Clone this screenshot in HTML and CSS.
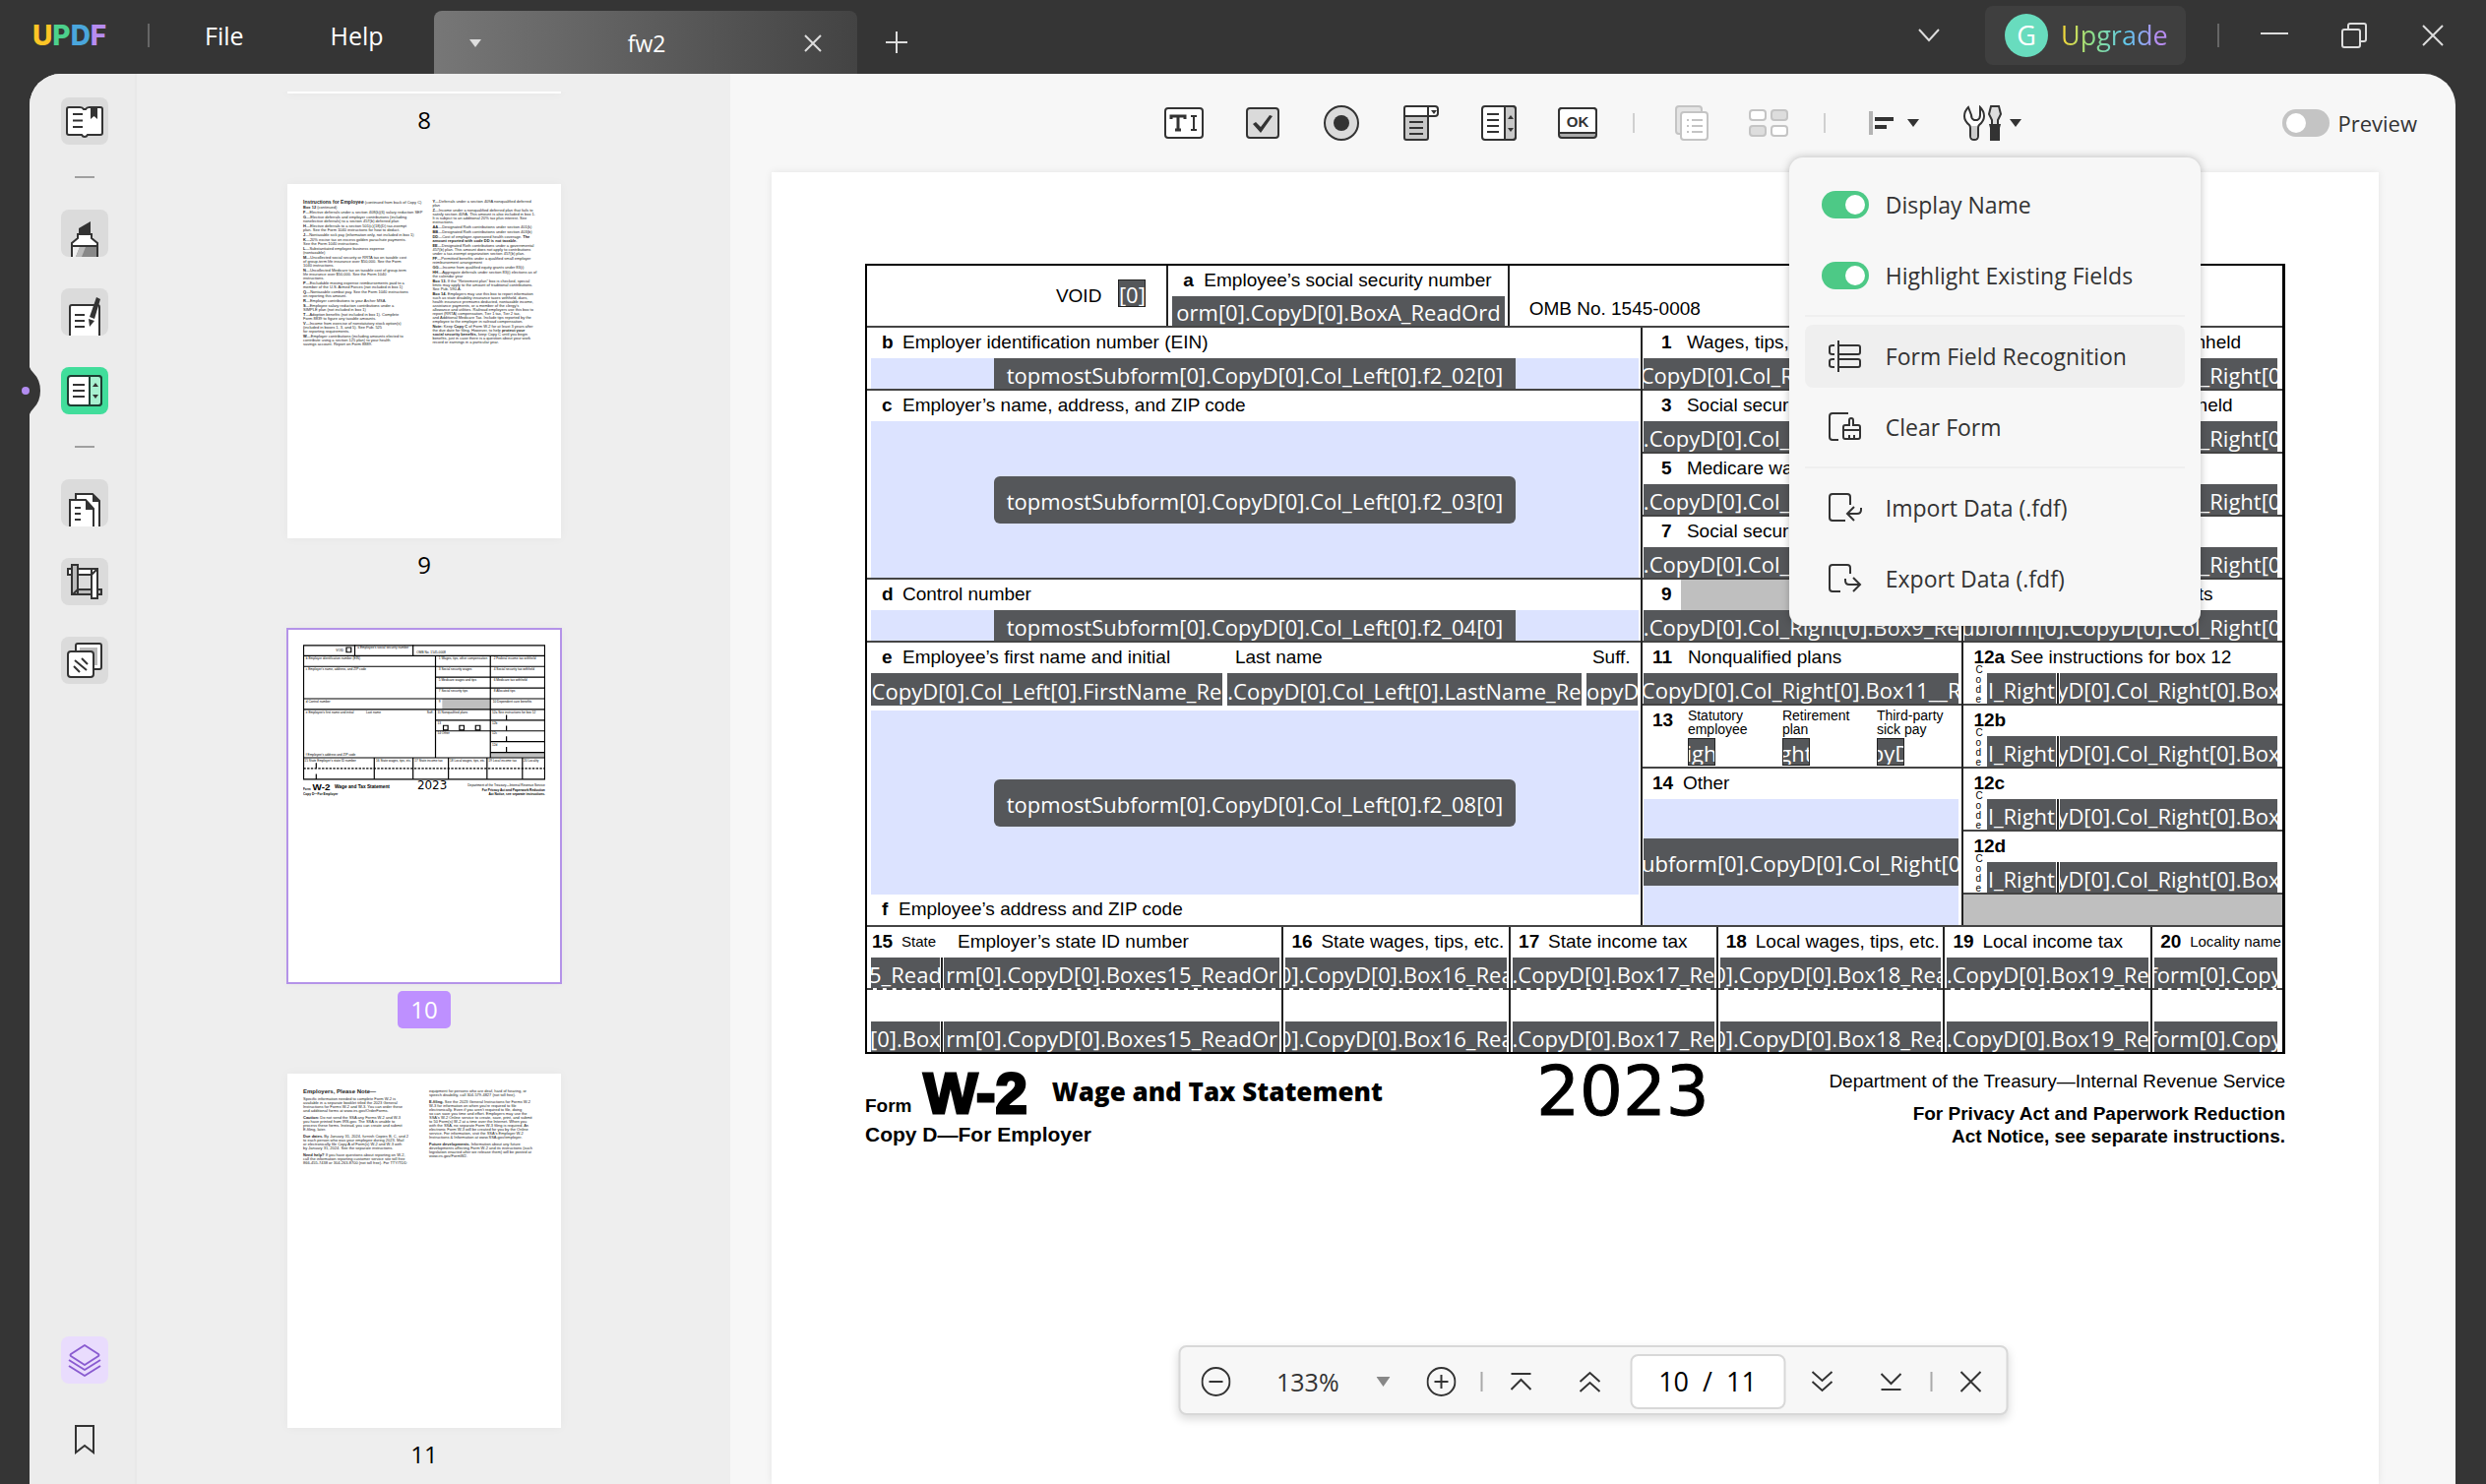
FILE: index.html
```html
<!DOCTYPE html>
<html lang="en">
<head>
<meta charset="utf-8">
<title>fw2 - UPDF</title>
<link rel="stylesheet" href="styles.css">
</head>
<body>
<div class="app">
  <header class="titlebar">
    <div class="logo" aria-label="UPDF"><span class="lu">U</span><span class="lp">P</span><span class="ld">D</span><span class="lf">F</span></div>
    <span class="bar-div"></span>
    <nav class="menus"><button type="button">File</button><button type="button">Help</button></nav>
    <div class="tab">
      <button type="button" class="tab-caret" aria-label="Tab list"><svg width="12" height="8"><path d="M0 0h12L6 8z" fill="#ddd"/></svg></button>
      <span class="tab-name">fw2</span>
      <button type="button" class="tab-close" aria-label="Close tab"><svg width="18" height="18"><path d="M1 1l16 16M17 1L1 17" stroke="#ddd" stroke-width="2"/></svg></button>
    </div>
    <button type="button" class="new-tab" aria-label="New tab"><svg width="24" height="24"><path d="M12 1v22M1 12h22" stroke="#ddd" stroke-width="2"/></svg></button>
    <div class="win">
      <button type="button" aria-label="More"><svg width="22" height="14"><path d="M1 1l10 11L21 1" fill="none" stroke="#ddd" stroke-width="2"/></svg></button>
      <button type="button" class="upgrade"><span class="avatar">G</span><span class="up-text">Upgrade</span></button>
      <span class="bar-div"></span>
      <button type="button" class="w-min" aria-label="Minimize"><svg width="28" height="26"><path d="M0 11h28" stroke="#ddd" stroke-width="2"/></svg></button>
      <button type="button" aria-label="Restore"><svg width="26" height="26" fill="none" stroke="#ddd" stroke-width="2"><rect x="1" y="7" width="18" height="18" rx="2"/><path d="M7 7V3q0-2 2-2h14q2 0 2 2v14q0 2-2 2h-4"/></svg></button>
      <button type="button" aria-label="Close"><svg width="22" height="22"><path d="M1 1l20 20M21 1L1 21" stroke="#ddd" stroke-width="2"/></svg></button>
    </div>
  </header>

  <main class="shell">
    <aside class="rail">
      <button type="button" class="tile" aria-label="Reader"><svg viewBox="0 0 48 48"><path d="M8 10h11q3 0 4 2h2q1-2 4-2h11q2 0 2 2v24q0 2-2 2H27q-1 2-3 2t-3-2H8q-2 0-2-2V12q0-2 2-2z" fill="#fff" stroke="#333" stroke-width="2"/><path d="M30 9h7v13l-3.500-3-3.500 3z" fill="#333"/><path d="M12 17h10M12 23.500h10M12 30h10" stroke="#333" stroke-width="2"/></svg></button>
      <span class="rail-div"></span>
      <button type="button" class="tile" aria-label="Comment"><svg viewBox="0 0 48 48"><path d="M18 25v-6l12-7v13z" fill="#333"/><path d="M17 25h14v4l6 5v4H11v-4l6-5z" fill="#fff" stroke="#333" stroke-width="2"/><path d="M11 37h26v12H11z" fill="#888"/><path d="M12 38h7l-4 10h-3z" fill="#eee"/><path d="M19 38h6l-4 10h-6z" fill="#bbb"/><path d="M11 48V37h26v11" fill="none" stroke="#333" stroke-width="2"/></svg></button>
      <button type="button" class="tile" aria-label="Edit PDF"><svg viewBox="0 0 48 48"><path d="M9 48V19q0-2 2-2h26q2 0 2 2v29" fill="#fff" stroke="#333" stroke-width="2"/><path d="M14 27h10M14 33h10M14 39h10" stroke="#333" stroke-width="2"/><path d="M36 9l4 2-6 20-5-2z" fill="#333"/><path d="M28 31l6 2-5 6z" fill="#333"/></svg></button>
      <div class="active-slot">
        <svg class="notch" viewBox="0 0 20 48"><path d="M8 0q1 3 4 6 7 7 7 18t-7 18q-3 3-4 6z" fill="#353535"/><circle cx="4" cy="24" r="4" fill="#b28cf0"/></svg>
        <button type="button" class="tile active" aria-label="Prepare Form"><svg viewBox="0 0 48 48"><rect x="7" y="9" width="34" height="30" rx="3" fill="#fff" stroke="#1e3f33" stroke-width="2"/><path d="M29 9h9q3 0 3 3v24q0 3-3 3h-9z" fill="#a8f0d0" stroke="#1e3f33" stroke-width="2"/><path d="M12 18h12M12 24h12M12 30h12" stroke="#333" stroke-width="2"/><path d="M32 20h6l-3-4zM32 28h6l-3 4z" fill="#333"/></svg></button>
      </div>
      <span class="rail-div"></span>
      <button type="button" class="tile" aria-label="Organize Pages"><svg viewBox="0 0 48 48"><path d="M15 48V15h17l7 7v26" fill="#fff" stroke="#333" stroke-width="2"/><path d="M32 15v8h8z" fill="#333"/><path d="M9 48V21h16l8 9v18" fill="#fff" stroke="#333" stroke-width="2"/><path d="M25 21v10h9z" fill="#333"/><path d="M14 29h6M14 35h6M14 41h6" stroke="#333" stroke-width="2"/></svg></button>
      <button type="button" class="tile" aria-label="Crop"><svg viewBox="0 0 48 48"><g fill="#fff" stroke="#333" stroke-width="2"><path d="M7 11h30v6H7z"/><path d="M12 32h29v5H12z" fill="#bbb"/><path d="M31 11h6v30h-6z"/><path d="M11 7h6v30h-6z" fill="#bbb"/></g><path d="M17 32l-5 5M31 17l5-5" stroke="#333" stroke-width="2"/></svg></button>
      <button type="button" class="tile" aria-label="Background"><svg viewBox="0 0 48 48"><rect x="15" y="7" width="26" height="26" rx="2" fill="#fff" stroke="#333" stroke-width="2"/><path d="M19 11h18v18H19z" fill="#bbb"/><rect x="7" y="15" width="26" height="26" rx="3" fill="#fff" stroke="#333" stroke-width="2"/><path d="M13 30l6 6M14 24l12 10M21 22l6 6" stroke="#333" stroke-width="2"/></svg></button>
      <button type="button" class="tile layers" aria-label="Thumbnails"><svg viewBox="0 0 48 48" fill="none" stroke="#8a5cd0" stroke-width="2" stroke-linejoin="round"><path d="M24 9l14 9q1 1 0 2l-14 9-14-9q-1-1 0-2z"/><path d="M8 24l16 10 16-10M8 30l16 10 16-10"/></svg></button>
      <button type="button" class="bookmark" aria-label="Bookmarks"><svg width="20" height="30" fill="none" stroke="#333" stroke-width="2"><path d="M1 1h18v27l-9-7-9 7z"/></svg></button>
    </aside>

    <aside class="thumbs">
      <div class="thumb"><div class="sheet"></div><span class="num">8</span></div>
      <div class="thumb">
        <div class="sheet text">
          <div>
            <p><b class="t-head">Instructions for Employee</b> (continued from back of Copy C)</p>
            <p><b>Box 12</b> (continued)</p>
            <p><b>F</b>—Elective deferrals under a section 408(k)(6) salary reduction SEP</p>
            <p><b>G</b>—Elective deferrals and employer contributions (including<br>nonelective deferrals) to a section 457(b) deferred plan</p>
            <p><b>H</b>—Elective deferrals to a section 501(c)(18)(D) tax-exempt<br>plan. See the Form 1040 instructions for how to deduct.</p>
            <p><b>J</b>—Nontaxable sick pay (information only, not included in box 1)</p>
            <p><b>K</b>—20% excise tax on excess golden parachute payments.<br>See the Form 1040 instructions.</p>
            <p><b>L</b>—Substantiated employee business expense<br>(nontaxable)</p>
            <p><b>M</b>—Uncollected social security or RRTA tax on taxable cost<br>of group-term life insurance over $50,000. See the Form<br>1040 instructions.</p>
            <p><b>N</b>—Uncollected Medicare tax on taxable cost of group-term<br>life insurance over $50,000. See the Form 1040<br>instructions.</p>
            <p><b>P</b>—Excludable moving expense reimbursements paid to a<br>member of the U.S. Armed Forces (not included in box 1)</p>
            <p><b>Q</b>—Nontaxable combat pay. See the Form 1040 instructions<br>on reporting this amount.</p>
            <p><b>R</b>—Employer contributions to your Archer MSA.</p>
            <p><b>S</b>—Employee salary reduction contributions under a<br>SIMPLE plan (not included in box 1)</p>
            <p><b>T</b>—Adoption benefits (not included in box 1). Complete<br>Form 8839 to figure any taxable amounts.</p>
            <p><b>V</b>—Income from exercise of nonstatutory stock option(s)<br>(included in boxes 1, 3, and 5). See Pub. 525<br>for reporting requirements.</p>
            <p><b>W</b>—Employer contributions (including amounts elected to<br>contribute using a section 125 plan) to your health<br>savings account. Report on Form 8889.</p>
          </div>
          <div>
            <p><b>Y</b>—Deferrals under a section 409A nonqualified deferred<br>plan</p>
            <p><b>Z</b>—Income under a nonqualified deferred plan that fails to<br>satisfy section 409A. This amount is also included in box 1.<br>It is subject to an additional 20% tax plus interest. See<br>instructions.</p>
            <p><b>AA</b>—Designated Roth contributions under section 401(k)</p>
            <p><b>BB</b>—Designated Roth contributions under section 403(b)</p>
            <p><b>DD</b>—Cost of employer-sponsored health coverage. <b>The<br>amount reported with code DD is not taxable.</b></p>
            <p><b>EE</b>—Designated Roth contributions under a governmental<br>457(b) plan. This amount does not apply to contributions<br>under a tax-exempt organization section 457(b) plan.</p>
            <p><b>FF</b>—Permitted benefits under a qualified small employer<br>reimbursement arrangement</p>
            <p><b>GG</b>—Income from qualified equity grants under 83(i)</p>
            <p><b>HH</b>—Aggregate deferrals under section 83(i) elections as of<br>the calendar year</p>
            <p><b>Box 13.</b> If the "Retirement plan" box is checked, special<br>limits may apply to the amount of traditional contributions.<br>See Pub. 590-A.</p>
            <p><b>Box 14.</b> Employers may use this box to report information<br>such as state disability insurance taxes withheld, dues,<br>health insurance premiums deducted, nontaxable income,<br>assistance payments, or a member of the clergy's<br>allowance and utilities. Railroad employers use this box to<br>report (RRTA) compensation, Tier 1 tax, Tier 2 tax,<br>and Additional Medicare Tax. Include tips reported by the<br>employee to the employer in railroad compensation.</p>
            <p><b>Note:</b> Keep <b>Copy C</b> of Form W-2 for at least 3 years after<br>the due date for filing. However, to help <b>protect your<br>social security benefits,</b> keep Copy C until you begin<br>benefits, just in case there is a question about your work<br>record or earnings in a particular year.</p>
          </div>
        </div>
        <span class="num">9</span>
      </div>
      <div class="thumb current">
        <div class="sheet">
          <svg class="mini" viewBox="0 0 1443 906">
            <g fill="#bfbfbf"><path d="M829 321h286v63H829z"/><path d="M1116 641h325v31H1116z"/></g>
            <g fill="none" stroke="#000" stroke-width="7"><path d="M3 3h1437v798H3z"/><path d="M2 65h1438M2 129h1438M2 321h1438M2 385h1438M789 193h652M789 257h652M789 449h652M789 513h326M1116 513h324M1116 577h324M1116 641h324M2 673h1438"/><path d="M308 2v63M655 2v63M789 65v608M1116 65v608M424 673v128M655 673v128M866 673v128M1096 673v128M1307 673v128M78 704v32M78 770v32M1212 418v30M1212 482v30M1212 546v30M1212 608v30"/><path d="M2 737h1438" stroke-dasharray="14 8"/><path d="M258 16h28v28h-28zM836 481h27v27h-27zM932 481h27v27h-27zM1028 481h27v27h-27z"/></g>
            <g class="mini-t"><text x="195" y="40">VOID</text><text x="324" y="24">a  Employee's social security number</text><text x="676" y="52">OMB No. 1545-0008</text><text x="16" y="88">b  Employer identification number (EIN)</text><text x="16" y="152">c  Employer's name, address, and ZIP code</text><text x="16" y="342">d  Control number</text><text x="16" y="408">e  Employee's first name and initial</text><text x="375" y="408">Last name</text><text x="738" y="408">Suff.</text><text x="16" y="664">f  Employee's address and ZIP code</text><text x="808" y="88">1  Wages, tips, other compensation</text><text x="1136" y="88">2  Federal income tax withheld</text><text x="808" y="152">3  Social security wages</text><text x="1136" y="152">4  Social security tax withheld</text><text x="808" y="216">5  Medicare wages and tips</text><text x="1136" y="216">6  Medicare tax withheld</text><text x="808" y="280">7  Social security tips</text><text x="1136" y="280">8  Allocated tips</text><text x="808" y="342">9</text><text x="1130" y="342">10  Dependent care benefits</text><text x="800" y="408">11  Nonqualified plans</text><text x="1126" y="408">12a See instructions for box 12</text><text x="800" y="472">13</text><text x="1126" y="472">12b</text><text x="800" y="534">14 Other</text><text x="1126" y="534">12c</text><text x="1126" y="600">12d</text><text x="8" y="694">15 State  Employer's state ID number</text><text x="434" y="694">16 State wages, tips, etc.</text><text x="664" y="694">17 State income tax</text><text x="874" y="694">18 Local wages, tips, etc.</text><text x="1104" y="694">19 Local income tax</text><text x="1314" y="694">20 Locality</text></g>
            <g font-weight="700"><text x="0" y="864" font-size="18">Form</text><text x="56" y="864" font-size="58" class="heavy">W-2</text><text x="188" y="852" font-size="28">Wage and Tax Statement</text><text x="0" y="894" font-size="19">Copy D—For Employer</text><text x="1442" y="872" font-size="19" text-anchor="end">For Privacy Act and Paperwork Reduction</text><text x="1442" y="896" font-size="19" text-anchor="end">Act Notice, see separate instructions.</text></g>
            <text x="680" y="862" font-size="70" class="dj">2023</text><text x="1442" y="842" font-size="19" text-anchor="end">Department of the Treasury—Internal Revenue Service</text>
          </svg>
        </div>
        <span class="num">10</span>
      </div>
      <div class="thumb">
        <div class="sheet text loose">
          <div>
            <p><b class="t-head">Employers, Please Note—</b></p>
            <p>Specific information needed to complete Form W-2 is<br>available in a separate booklet titled the 2023 General<br>Instructions for Forms W-2 and W-3. You can order these<br>and additional forms at www.irs.gov/OrderForms.</p>
            <p><b>Caution:</b> Do not send the SSA any Forms W-2 and W-3<br>you have printed from IRS.gov. The SSA is unable to<br>process these forms. Instead, you can create and submit<br>E-filing, later.</p>
            <p><b>Due dates.</b> By January 31, 2024, furnish Copies B, C, and 2<br>to each person who was your employee during 2023. Mail<br>or electronically file Copy A of Form(s) W-2 and W-3 with<br>by January 31, 2024. See the separate instructions.</p>
            <p><b>Need help?</b> If you have questions about reporting on W-2,<br>call the information reporting customer service site toll free<br>866-455-7438 or 304-263-8700 (not toll free). For TTY/TDD</p>
          </div>
          <div>
            <p>equipment for persons who are deaf, hard of hearing, or<br>speech disability, call 304-579-4827 (not toll free).</p>
            <p><b>E-filing.</b> See the 2023 General Instructions for Forms W-2<br>W-3 for information on when you're required to file<br>electronically. Even if you aren't required to file, doing<br>so can save you time and effort. Employers may use the<br>SSA's W-2 Online service to create, save, print, and submit<br>to 50 Form(s) W-2 at a time over the Internet. When you<br>with the SSA, no separate Form W-3 filing is required. An<br>electronic Form W-3 will be created for you by the Online<br>service. For information, visit the SSA's Employer W-2<br>Instructions &amp; Information at www.SSA.gov/employer.</p>
            <p><b>Future developments.</b> Information about any future<br>developments affecting Form W-2 and its instructions (such<br>legislation enacted after we release them) will be posted at<br>www.irs.gov/FormW2.</p>
          </div>
        </div>
        <span class="num">11</span>
      </div>
    </aside>

    <section class="doc">
      <div class="toolbar">
        <span class="sp-a"></span>
        <div class="tools">
          <button type="button" aria-label="Text field"><svg width="40" height="36"><rect x="1" y="3" width="38" height="30" rx="3" fill="#fff" stroke="#333" stroke-width="2"/><path d="M7 14v-3h14v3M14 11v14M11 25h6" fill="none" stroke="#333" stroke-width="3"/><path d="M27 11h6M30 11v14M27 25h6" stroke="#333" stroke-width="2"/></svg></button>
          <button type="button" aria-label="Check box"><svg width="40" height="36"><rect x="4" y="3" width="32" height="30" rx="3" fill="#dadada" stroke="#333" stroke-width="2"/><path d="M10 19l3-2 5 5 9-12 3 1-12 17z" fill="#333"/></svg></button>
          <button type="button" aria-label="Radio button"><svg width="40" height="36"><circle cx="20" cy="18" r="17" fill="#dadada" stroke="#333" stroke-width="2"/><circle cx="20" cy="18" r="8" fill="#333"/></svg></button>
          <button type="button" aria-label="Dropdown"><svg width="40" height="36"><path d="M4 10h24v23q0 2-2 2H6q-2 0-2-2z" fill="#c8c8c8" stroke="#333" stroke-width="2"/><path d="M4 11V3q0-2 2-2h29q3 0 3 3v4q0 3-3 3z" fill="#fff" stroke="#333" stroke-width="2"/><path d="M28 1v10" stroke="#333" stroke-width="2"/><path d="M31 5h6l-3 4z" fill="#333"/><path d="M9 17h14M9 23h14M9 29h14" stroke="#333" stroke-width="2"/></svg></button>
          <button type="button" aria-label="List box"><svg width="40" height="36"><rect x="3" y="1" width="34" height="34" rx="3" fill="#fff" stroke="#333" stroke-width="2"/><path d="M26 1h8q3 0 3 3v28q0 3-3 3h-8z" fill="#c8c8c8" stroke="#333" stroke-width="2"/><path d="M8 9h12M8 15h12M8 21h12M8 27h12" stroke="#333" stroke-width="2"/><path d="M29 14h6l-3-4zM29 23h6l-3 4z" fill="#333"/></svg></button>
          <button type="button" aria-label="Button"><svg width="40" height="36"><rect x="1" y="3" width="38" height="30" rx="3" fill="#aaa" stroke="#333" stroke-width="2"/><path d="M1 27V6q0-3 3-3h32q3 0 3 3v22H1z" fill="#fff" stroke="#333" stroke-width="2"/><text x="20" y="22" class="ok">OK</text></svg></button>
        </div>
        <span class="tb-div"></span>
        <button type="button" aria-label="Copy"><svg width="36" height="36" stroke="#c4c4c4" stroke-width="2"><rect x="2" y="1" width="26" height="28" rx="3" fill="#e4e4e4"/><rect x="7" y="7" width="27" height="28" rx="3" fill="#fff"/><path d="M13 15h2M18 15h11M13 21h2M18 21h11M13 27h2M18 27h11"/></svg></button>
        <button type="button" aria-label="Multiple copies"><svg width="40" height="36" stroke="#c4c4c4" stroke-width="2"><rect x="1" y="5" width="16" height="10" rx="3" fill="#fff"/><rect x="23" y="5" width="16" height="10" rx="3" fill="#ddd"/><rect x="1" y="21" width="16" height="10" rx="3" fill="#ddd"/><rect x="23" y="21" width="16" height="10" rx="3" fill="#fff"/></svg></button>
        <span class="tb-div"></span>
        <button type="button" class="align" aria-label="Align"><svg width="52" height="36"><path d="M2 6v24" stroke="#b4b4b4" stroke-width="4"/><path d="M6 14h19M6 22h12" stroke="#333" stroke-width="4"/><path d="M39 14h12l-6 8z" fill="#333"/></svg></button>
        <div class="tool-menu">
          <button type="button" aria-label="Form tools" aria-expanded="true"><svg width="60" height="36"><path d="M5 2q-4 4-4 9t5 9q1 1 1 3v8q0 4 4 4t4-4v-8q0-2 1-3 5-4 5-9t-4-9v8q0 4-3 5h-3q-3-1-3-5z" fill="#fff" stroke="#333" stroke-width="2"/><path d="M8 21h6v10q0 3-3 3t-3-3z" fill="#ccc"/><path d="M28 1h8l2 8-3 6v5h-6v-5l-3-6z" fill="#ddd" stroke="#333" stroke-width="2"/><path d="M26 19h12l-1 4v13H27V23z" fill="#333"/><path d="M47 14h12l-6 8z" fill="#333"/></svg></button>
          <div class="menu" role="menu">
            <label class="item"><input type="checkbox" class="switch" checked>Display Name</label>
            <label class="item"><input type="checkbox" class="switch" checked>Highlight Existing Fields</label>
            <hr>
            <button type="button" class="item hover"><svg width="34" height="34" fill="none" stroke="#333" stroke-width="2"><path d="M10 1v32M10 6h20q2 0 2 2v5q0 2-2 2H10M10 20h20q2 0 2 2v4q0 2-2 2H10M6 6H4Q1 6 1 8v5q0 2 3 2h2M6 20H4q-3 0-3 2v4q0 2 3 2h2"/></svg>Form Field Recognition</button>
            <button type="button" class="item"><svg width="34" height="34" fill="none" stroke="#333" stroke-width="2"><path d="M20 3H4Q1 3 1 6v21q0 3 3 3h6"/><path d="M15 17q0-2 2-2h4v-5q0-2 2-2t2 2v5h5q2 0 2 2v10q0 2-2 2H17q-2 0-2-2zM15 20h17M21 29v-4M26 29v-4"/></svg>Clear Form</button>
            <hr>
            <button type="button" class="item"><svg width="34" height="34" fill="none" stroke="#333" stroke-width="2"><path d="M22 14V6q0-3-3-3H4Q1 3 1 6v21q0 3 3 3h13M33 17v2q0 4-4 4H20M26 16l-7 7 7 7"/></svg>Import Data (.fdf)</button>
            <button type="button" class="item"><svg width="34" height="34" fill="none" stroke="#333" stroke-width="2"><path d="M22 12V6q0-3-3-3H4Q1 3 1 6v21q0 3 3 3h8M17 17v2q0 4 4 4h10M25 16l7 7-7 7"/></svg>Export Data (.fdf)</button>
          </div>
        </div>
        <span class="sp-b"></span>
        <label class="preview"><input type="checkbox" class="switch">Preview</label>
      </div>

      <article class="page">
        <div class="w2">
          <div class="r-top">
            <div class="cell void"><span>VOID</span><button type="button" class="field box"><span class="tag">[0]</span></button></div>
            <div class="cell ssn"><div class="lab"><b>a</b>Employee’s social security number</div><button type="button" class="field"><span class="tag">orm[0].CopyD[0].BoxA_ReadOrd</span></button></div>
            <div class="cell omb">OMB No. 1545-0008</div>
          </div>
          <div class="r-body">
            <div class="left">
              <div class="cell h1"><div class="lab"><b>b</b>Employer identification number (EIN)</div><button type="button" class="field"><span class="tag">topmostSubform[0].CopyD[0].Col_Left[0].f2_02[0]</span></button></div>
              <div class="cell h3"><div class="lab"><b>c</b>Employer’s name, address, and ZIP code</div><button type="button" class="field"><span class="tag">topmostSubform[0].CopyD[0].Col_Left[0].f2_03[0]</span></button></div>
              <div class="cell h1"><div class="lab"><b>d</b>Control number</div><button type="button" class="field"><span class="tag">topmostSubform[0].CopyD[0].Col_Left[0].f2_04[0]</span></button></div>
              <div class="cell names">
                <div class="name-row">
                  <div><div class="lab"><b>e</b>Employee’s first name and initial</div><button type="button" class="field"><span class="tag">CopyD[0].Col_Left[0].FirstName_Re</span></button></div>
                  <div><div class="lab last">Last name</div><button type="button" class="field"><span class="tag">.CopyD[0].Col_Left[0].LastName_Re</span></button></div>
                  <div><div class="lab suff">Suff.</div><button type="button" class="field"><span class="tag">opyD</span></button></div>
                </div>
                <button type="button" class="field addr"><span class="tag">topmostSubform[0].CopyD[0].Col_Left[0].f2_08[0]</span></button>
                <div class="lab f-lab"><b>f</b>Employee’s address and ZIP code</div>
              </div>
            </div>
            <div class="mid">
              <div class="cell h1"><div class="lab"><b>1</b>Wages, tips, other compensation</div><button type="button" class="field"><span class="tag">CopyD[0].Col_Right[0].Box1_Rea</span></button></div>
              <div class="cell h1"><div class="lab"><b>3</b>Social security wages</div><button type="button" class="field"><span class="tag">.CopyD[0].Col_Right[0].Box3_Re</span></button></div>
              <div class="cell h1"><div class="lab"><b>5</b>Medicare wages and tips</div><button type="button" class="field"><span class="tag">.CopyD[0].Col_Right[0].Box5_Re</span></button></div>
              <div class="cell h1"><div class="lab"><b>7</b>Social security tips</div><button type="button" class="field"><span class="tag">.CopyD[0].Col_Right[0].Box7_Re</span></button></div>
              <div class="cell h1"><div class="lab nine"><b>9</b><span class="gray"></span></div><button type="button" class="field"><span class="tag">.CopyD[0].Col_Right[0].Box9_Re</span></button></div>
              <div class="cell h1"><div class="lab two"><b>11</b>Nonqualified plans</div><button type="button" class="field"><span class="tag">CopyD[0].Col_Right[0].Box11__R</span></button></div>
              <div class="cell h1 checks">
                <b>13</b>
                <div>Statutory<br>employee<button type="button" class="field box"><span class="tag">igh</span></button></div>
                <div>Retirement<br>plan<button type="button" class="field box"><span class="tag">ght</span></button></div>
                <div>Third-party<br>sick pay<button type="button" class="field box"><span class="tag">pyD</span></button></div>
              </div>
              <div class="cell other"><div class="lab two"><b>14</b>Other</div><button type="button" class="field"><span class="tag">ubform[0].CopyD[0].Col_Right[0</span></button></div>
            </div>
            <div class="right">
              <div class="cell h1"><div class="lab"><b>2</b>Federal income tax withheld</div><button type="button" class="field"><span class="tag">ubform[0].CopyD[0].Col_Right[0</span></button></div>
              <div class="cell h1"><div class="lab"><b>4</b>Social security tax withheld</div><button type="button" class="field"><span class="tag">ubform[0].CopyD[0].Col_Right[0</span></button></div>
              <div class="cell h1"><div class="lab"><b>6</b>Medicare tax withheld</div><button type="button" class="field"><span class="tag">ubform[0].CopyD[0].Col_Right[0</span></button></div>
              <div class="cell h1"><div class="lab"><b>8</b>Allocated tips</div><button type="button" class="field"><span class="tag">ubform[0].CopyD[0].Col_Right[0</span></button></div>
              <div class="cell h1"><div class="lab two"><b>10</b>Dependent care benefits</div><button type="button" class="field"><span class="tag">ubform[0].CopyD[0].Col_Right[0</span></button></div>
              <div class="cell h1 twelve"><div class="lab"><b>12a</b>See instructions for box 12</div><div class="pair"><span class="code">C<br>o<br>d<br>e</span><button type="button" class="field"><span class="tag">l_Right</span></button><i></i><button type="button" class="field"><span class="tag">yD[0].Col_Right[0].Box</span></button></div></div>
              <div class="cell h1 twelve"><div class="lab"><b>12b</b></div><div class="pair"><span class="code">C<br>o<br>d<br>e</span><button type="button" class="field"><span class="tag">l_Right</span></button><i></i><button type="button" class="field"><span class="tag">yD[0].Col_Right[0].Box</span></button></div></div>
              <div class="cell h1 twelve"><div class="lab"><b>12c</b></div><div class="pair"><span class="code">C<br>o<br>d<br>e</span><button type="button" class="field"><span class="tag">l_Right</span></button><i></i><button type="button" class="field"><span class="tag">yD[0].Col_Right[0].Box</span></button></div></div>
              <div class="cell h1 twelve"><div class="lab"><b>12d</b></div><div class="pair"><span class="code">C<br>o<br>d<br>e</span><button type="button" class="field"><span class="tag">l_Right</span></button><i></i><button type="button" class="field"><span class="tag">yD[0].Col_Right[0].Box</span></button></div></div>
              <div class="gray tail"></div>
            </div>
          </div>
          <div class="r-state">
            <div class="st">
              <div class="lab"><b>15</b><span class="small st-n">State</span>Employer’s state ID number</div>
              <div class="line st-pair"><button type="button" class="field"><span class="tag">5_Read</span></button><i></i><button type="button" class="field"><span class="tag">rm[0].CopyD[0].Boxes15_ReadOr</span></button></div>
              <div class="line st-pair low"><button type="button" class="field"><span class="tag">[0].Box</span></button><i></i><button type="button" class="field"><span class="tag">rm[0].CopyD[0].Boxes15_ReadOr</span></button></div>
            </div>
            <div class="st">
              <div class="lab"><b>16</b>State wages, tips, etc.</div>
              <div class="line"><button type="button" class="field"><span class="tag">0].CopyD[0].Box16_Rea</span></button></div>
              <div class="line low"><button type="button" class="field"><span class="tag">0].CopyD[0].Box16_Rea</span></button></div>
            </div>
            <div class="st">
              <div class="lab"><b>17</b>State income tax</div>
              <div class="line"><button type="button" class="field"><span class="tag">.CopyD[0].Box17_Re</span></button></div>
              <div class="line low"><button type="button" class="field"><span class="tag">.CopyD[0].Box17_Re</span></button></div>
            </div>
            <div class="st">
              <div class="lab"><b>18</b>Local wages, tips, etc.</div>
              <div class="line"><button type="button" class="field"><span class="tag">0].CopyD[0].Box18_Rea</span></button></div>
              <div class="line low"><button type="button" class="field"><span class="tag">0].CopyD[0].Box18_Rea</span></button></div>
            </div>
            <div class="st">
              <div class="lab"><b>19</b>Local income tax</div>
              <div class="line"><button type="button" class="field"><span class="tag">.CopyD[0].Box19_Re</span></button></div>
              <div class="line low"><button type="button" class="field"><span class="tag">.CopyD[0].Box19_Re</span></button></div>
            </div>
            <div class="st">
              <div class="lab"><b>20</b><span class="small">Locality name</span></div>
              <div class="line"><button type="button" class="field"><span class="tag">form[0].Copy</span></button></div>
              <div class="line low"><button type="button" class="field"><span class="tag">form[0].Copy</span></button></div>
            </div>
          </div>
        </div>
        <footer class="w2-foot">
          <div class="f-left">
            <div class="f-title"><b>Form</b><strong class="w2-mark">W-2</strong><strong class="w2-name">Wage and Tax Statement</strong></div>
            <b class="copy">Copy D—For Employer</b>
          </div>
          <div class="year">2023</div>
          <div class="f-right"><p>Department of the Treasury—Internal Revenue Service</p><b>For Privacy Act and Paperwork Reduction<br>Act Notice, see separate instructions.</b></div>
        </footer>
      </article>

      <div class="pager">
        <button type="button" aria-label="Zoom out"><svg width="30" height="30" fill="none" stroke="#333" stroke-width="2"><circle cx="15" cy="15" r="14"/><path d="M8 15h14"/></svg></button>
        <button type="button" class="zoom">133%<svg width="14" height="10"><path d="M0 0h14L7 10z" fill="#888"/></svg></button>
        <button type="button" aria-label="Zoom in"><svg width="30" height="30" fill="none" stroke="#333" stroke-width="2"><circle cx="15" cy="15" r="14"/><path d="M8 15h14M15 8v14"/></svg></button>
        <span class="p-div"></span>
        <button type="button" aria-label="First page"><svg width="22" height="20" fill="none" stroke="#333" stroke-width="2"><path d="M1 2h20M1 18L11 8l10 10"/></svg></button>
        <button type="button" class="far" aria-label="Previous page"><svg width="22" height="22" fill="none" stroke="#333" stroke-width="2"><path d="M1 11L11 2l10 9M1 21l10-9 10 9"/></svg></button>
        <input class="page-no" type="text" value="10  /  11" aria-label="Page">
        <button type="button" aria-label="Next page"><svg width="22" height="22" fill="none" stroke="#333" stroke-width="2"><path d="M1 1l10 9 10-9M1 11l10 9 10-9"/></svg></button>
        <button type="button" class="far" aria-label="Last page"><svg width="22" height="20" fill="none" stroke="#333" stroke-width="2"><path d="M1 2l10 10L21 2M1 18h20"/></svg></button>
        <span class="p-div"></span>
        <button type="button" aria-label="Close"><svg width="22" height="22" fill="none" stroke="#333" stroke-width="2"><path d="M1 1l20 20M21 1L1 21"/></svg></button>
      </div>
    </section>
  </main>
</div>
</body>
</html>
```
FILE: styles.css
```css
* { box-sizing: border-box; margin: 0; padding: 0; }
body { font-family: "Open Sans", "Noto Sans", sans-serif; font-size: 23px; color: #333; background: #353535; }
button { font: inherit; color: inherit; background: none; border: 0; }
svg { display: block; flex: none; }
.app { height: 100vh; display: flex; flex-direction: column; overflow: hidden; }
.dj { font-family: "DejaVu Sans", sans-serif; }

/* Title bar */
.titlebar { flex: none; height: 75px; display: flex; align-items: center; color: #fff; padding: 0 43px 4px 33px; font-size: 25px; }
.logo { display: flex; width: 76px; font: 800 28px/1 Inter, sans-serif; }
.lu { color: #fcc526; } .lp { color: #4cd08c; } .ld { color: #4aa6dc; } .lf { color: #b78cf0; }
.bar-div { width: 2px; height: 24px; background: #666; margin-left: 41px; }
.menus { display: flex; margin-left: 56px; gap: 88px; width: 233px; }
.tab { align-self: flex-end; margin-bottom: -4px; width: 430px; height: 64px; border-radius: 8px 8px 0 0; background: linear-gradient(90deg, #777, #434343); display: flex; align-items: center; padding: 2px 36px 0 36px; }
.tab-name { flex: 1; text-align: center; padding-left: 8px; font-size: 23px; }
.new-tab { margin-left: 28px; padding-top: 14px; }
.win { margin-left: auto; display: flex; align-items: center; }
.upgrade { margin-left: 46px; width: 204px; height: 60px; border-radius: 8px; background: #3f3f3f; display: flex; align-items: center; gap: 13px; padding-left: 20px; }
.avatar { width: 44px; height: 44px; border-radius: 50%; background: #68dcbe; color: #fff; line-height: 44px; text-align: center; font-size: 27px; }
.up-text { font-size: 27px; background: linear-gradient(90deg, #f8d634, #8ce08c 30%, #60c8f0 62%, #b78cf0 90%); -webkit-background-clip: text; background-clip: text; color: transparent; }
.win .bar-div { margin-left: 32px; }
.win button + .bar-div + button { margin-left: 42px; }
.win .w-min + button { margin-left: 54px; }
.win .w-min + button + button { margin-left: 56px; }

/* Shell */
.shell { flex: 1; min-height: 0; margin: 0 31px 0 30px; display: flex; border-radius: 32px 32px 0 0; background: #f7f7f7; }
.rail { width: 109px; background: #ececec; border-radius: 32px 0 0 0; border-right: 2px solid #e8e8e8; display: flex; flex-direction: column; align-items: center; padding: 24px 0 0 5px; }
.tile { width: 48px; height: 48px; border-radius: 8px; background: #dbdbdb; overflow: hidden; flex: none; }
.tile + .tile, .tile + .active-slot { margin-top: 32px; }
.rail-div { width: 20px; height: 2px; background: #a0a0a0; margin: 32px 0; flex: none; }
.active { background: #41dd9b; }
.active-slot { position: relative; display: flex; }
.notch { position: absolute; left: -40px; top: 0; width: 20px; height: 48px; }
.layers.tile { background: #e9dcfd; margin-top: auto; }
.bookmark { margin: 42px 0 30px; }

/* Thumbnails */
.thumbs { width: 603px; background: #eee; border-top: 18px solid #eee; overflow: hidden; display: flex; flex-direction: column; align-items: center; padding-right: 19px; }
.thumb { flex: none; height: 452px; display: flex; flex-direction: column; align-items: center; }
.thumb:first-child { margin-top: -358px; }
.sheet { width: 278px; height: 360px; background: #fff; box-shadow: 0 0 10px rgba(0,0,0,.04); padding: 16px; }
.num { color: #000; line-height: 38px; margin-top: 8px; font-size: 24px; }
.current .sheet { outline: 2px solid #b493e8; outline-offset: -1px; }
.current .num { width: 54px; height: 38px; text-align: center; background: #be90ff; color: #fff; border-radius: 5px; }
.text { display: grid; grid-template-columns: 1fr 1fr; gap: 10px; font: 4px/4px "Liberation Sans", Arial, sans-serif; color: #222; white-space: nowrap; }
.text p { margin-bottom: 1px; }
.loose p { margin-bottom: 3px; }
.t-head { font-size: 5px; }
.loose .t-head { font-size: 6px; }
.mini { width: 246px; height: 155px; font-family: "Liberation Sans", Arial, sans-serif; }
.mini-t { font-size: 19px; white-space: pre; }

/* Document column */
.doc { flex: 1; min-width: 0; position: relative; display: flex; flex-direction: column; }
.toolbar { height: 100px; flex: none; display: flex; align-items: center; padding-right: 39px; }
.sp-a { flex: 438; } .sp-b { flex: 263; }
.tools { display: flex; gap: 40px; }
.ok { font: 700 15px "Liberation Sans", Arial, sans-serif; text-anchor: middle; fill: #333; }
.tb-div { width: 2px; height: 20px; background: #d0d0d0; margin: 0 40px 0 36px; }
.tb-div + button + button { margin-left: 40px; }
.tb-div + .align { margin-left: 4px; margin-right: 44px; }
.tool-menu { position: relative; display: flex; }
.menu { position: absolute; z-index: 5; top: 53px; left: -177px; width: 418px; padding: 16px; border-radius: 14px; background: #f7f7f7; box-shadow: 0 0 8px rgba(0,0,0,.25); display: flex; flex-direction: column; gap: 8px; }
.menu hr { border: 0; border-top: 2px solid #efefef; }
.item { height: 64px; display: flex; align-items: center; border-radius: 8px; padding-left: 24px; width: 100%; white-space: nowrap; }
.item svg { margin-right: 24px; }
.item .switch { margin: 0 17px 0 -7px; }
.hover { background: #efefef; }
.switch { appearance: none; flex: none; width: 48px; height: 28px; border-radius: 14px; background: #c4c4c4; display: flex; align-items: center; padding: 4px; }
.switch::before { content: ""; width: 20px; height: 20px; border-radius: 50%; background: #fff; }
.switch:checked { background: #4dc986; justify-content: flex-end; }
.preview { display: flex; align-items: center; gap: 8px; font-size: 22px; }

/* Page */
.page { flex: 1; margin: 0 78px 0 42px; padding: 93px 95px 0; background: #fff; box-shadow: 0 0 8px rgba(0,0,0,.08); font: 19px/30px "Liberation Sans", Arial, sans-serif; color: #000; white-space: nowrap; }
.w2 { border: 2px solid #000; border-right-width: 3px; }
.r-top { display: grid; grid-template-columns: 307fr 347fr 787fr; grid-template-rows: minmax(0, 1fr); height: 63px; border-bottom: 2px solid #444; }
.r-body { display: grid; grid-template-columns: minmax(0, 789fr) minmax(0, 327fr) minmax(0, 324fr); border-bottom: 2px solid #444; }
.r-state { display: grid; grid-template-columns: 424fr 231fr 211fr 231fr 211fr 132fr; }
.cell { display: flex; flex-direction: column; border-bottom: 2px solid #444; }
.r-top .cell { border-bottom: 0; border-right: 2px solid #222; min-width: 0; }
.r-top .omb { border-right: 0; }
.left, .mid { border-right: 2px solid #222; }
.left > :last-child, .mid > :last-child { border-bottom: 0; }
.h1 { height: 64px; }
.h3 { height: 192px; }
.lab { height: 31px; flex: none; display: flex; padding-left: 15px; }
.lab b { width: 21px; flex: none; }
.lab.f-lab b { width: 17px; }
.small { font-size: 15px; }
.field { flex: 1; min-height: 0; min-width: 0; background: #dce3ff; display: flex; align-items: center; justify-content: center; overflow: hidden; }
.tag { flex: none; min-width: 100%; height: 48px; background: #55575a; color: #fff; font: 22px/51px "Open Sans", "Noto Sans", sans-serif; text-align: center; }
.left .tag { min-width: 0; padding: 0 13px; border-radius: 6px; }
.left .name-row .tag { min-width: 100%; padding: 0; border-radius: 0; }
.left .cell > .field { margin: 0 2px 0 4px; }
.left .h1 .tag { border-radius: 0; }
.r-top .void { flex-direction: row; align-items: center; justify-content: flex-end; gap: 17px; padding-right: 21px; }
.field.box { flex: none; width: 28px; height: 28px; border: 1px solid #222; }
.void .box { margin-bottom: 6px; }
.ssn .field { margin: 0 3px 0 4px; }
.omb { padding: 29px 0 0 20px; }
.names { height: 287px; }
.name-row { display: grid; grid-template-columns: minmax(0, 357fr) minmax(0, 360fr) minmax(0, 52fr); grid-template-rows: minmax(0, 1fr); gap: 5px; height: 64px; margin: 0 3px 5px 4px; }
.name-row > div { display: flex; flex-direction: column; }
.name-row .lab { padding-left: 11px; }
.name-row .last { padding-left: 8px; }
.name-row .suff { padding-left: 6px; }
.name-row .field, .name-row .tag { width: 100%; }
.mid .lab, .right .lab { padding-left: 19px; }
.mid .lab b, .right .lab b { width: 26px; }
.mid .lab.two, .right .lab.two { padding-left: 10px; }
.mid .lab.two b, .right .lab.two b { width: 36px; }
.mid .other .lab.two b { width: 31px; }
.mid .cell > .field { margin: 0 3px 0 1px; }
.right .cell > .field { margin: 0 5px 0 1px; }
.gray { background: #bfbfbf; }
.mid .lab.nine b { width: 20px; }
.nine .gray { flex: 1; }
.checks.cell { flex-direction: row; font-size: 14px; line-height: 14px; padding: 3px 0 0 10px; }
.checks b { width: 36px; font-size: 19px; line-height: 24px; flex: none; }
.checks div { width: 96px; flex: none; }
.checks div:last-child { width: auto; }
.checks .box { margin-top: 2px; }
.other { height: 159px; }
.right .twelve .lab { padding-left: 10px; }
.right .twelve .lab b { width: 37px; }
.pair { display: flex; flex: 1; min-height: 0; padding-right: 5px; }
.pair i, .st-pair i { width: 2px; margin: 0 1px; background: #222; flex: none; }
.pair .field:nth-of-type(1) { flex: 70; }
.pair .field:nth-of-type(2) { flex: 223; }
.code { width: 24px; font-size: 10px; line-height: 10px; padding-left: 12px; margin-top: -8px; flex: none; }
.tail { height: 31px; }
.st { display: flex; flex-direction: column; min-width: 0; border-right: 2px solid #222; }
.st:last-child { border-right: 0; }
.st .lab { padding-left: 8px; }
.st .lab b { width: 30px; }
.st:first-child .lab { padding-left: 5px; }
.st-n { width: 57px; }
.st .line { height: 33px; display: flex; padding: 0 2px; border-bottom: 2px dashed #444; }
.st .low { margin-top: 32px; height: 31px; border-bottom: 0; }
.st:first-child .line { padding-left: 4px; }
.st:last-child .line { padding-right: 5px; }
.st-pair .field:nth-of-type(1) { flex: 70; }
.st-pair .field:nth-of-type(2) { flex: 342; }

.w2-foot { display: grid; grid-template-columns: 683fr 174fr 586fr; padding-top: 8px; }
.f-title { display: flex; align-items: flex-end; height: 60px; line-height: 30px; }
.w2-mark { font-size: 58px; line-height: 56px; -webkit-text-stroke: 3px #000; margin: 0 25px 0 12px; }
.w2-name { font: 800 26px/30px "Open Sans", sans-serif; align-self: center; }
.copy { font-size: 21px; line-height: 26px; }
.year { font: 69px/60px "DejaVu Sans", sans-serif; -webkit-text-stroke: 1px #000; }
.f-right { text-align: right; line-height: 23px; padding-top: 8px; }
.f-right p { margin-bottom: 10px; }

/* Pager */
.pager { position: absolute; bottom: 70px; left: 50%; transform: translateX(-50%); width: 843px; height: 71px; border: 2px solid #d8d8d8; border-radius: 8px; background: #f7f7f7; box-shadow: 0 4px 10px rgba(0,0,0,.15); display: flex; align-items: center; padding: 2px 21px 0; }
.zoom { display: flex; align-items: center; justify-content: space-between; width: 115px; margin: 0 37px 0 47px; font-size: 25px; }
.p-div { width: 2px; height: 20px; background: #aaa; margin: 0 28px 0 25px; }
.far { margin-left: 48px; }
.far + .p-div { margin-left: 29px; }
.page-no { width: 158px; height: 56px; margin: 0 26px 0 30px; border: 2px solid #d8d8d8; border-radius: 8px; background: #fff; font: 27px "Open Sans", sans-serif; text-align: center; color: #000; }
```
